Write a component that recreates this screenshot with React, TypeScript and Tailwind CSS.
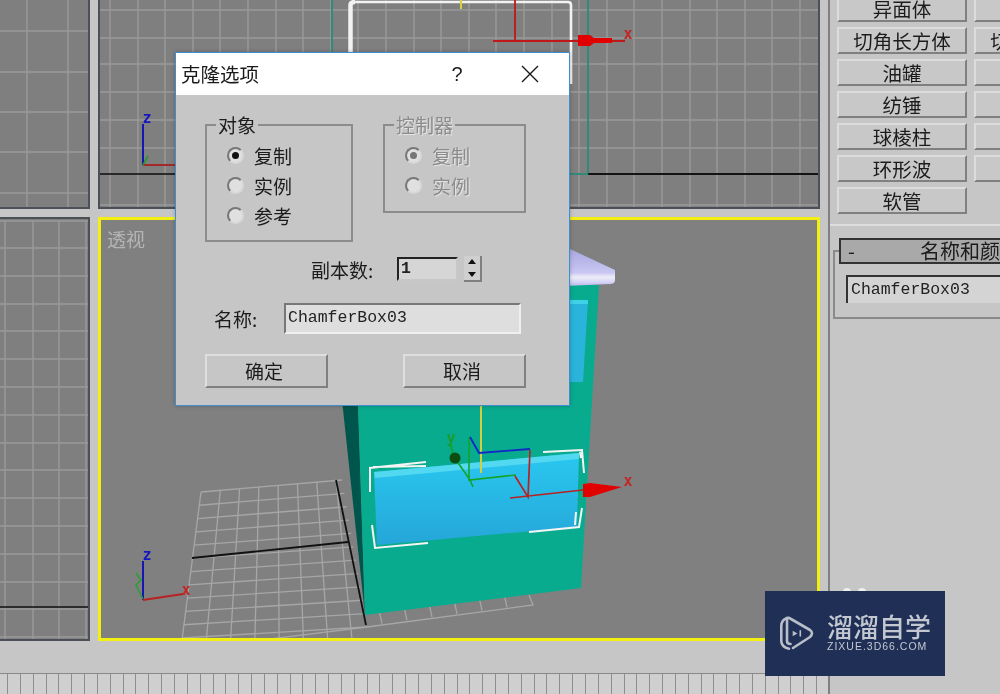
import React from "react";

const cjk = { fontFamily: '"Noto Sans CJK SC", "Noto Sans", sans-serif' };
const mono = { fontFamily: '"Liberation Mono", "Noto Sans CJK SC", monospace' };

function Lines({ xs, ys, x0, x1, y0, y1, color = "#9a9a9a" }: { xs: number[]; ys: number[]; x0: number; x1: number; y0: number; y1: number; color?: string }) {
  return (
    <g stroke={color} strokeWidth="1.4" fill="none">
      {xs.map((x) => <line key={"x" + x} x1={x} x2={x} y1={y0} y2={y1} />)}
      {ys.map((y) => <line key={"y" + y} y1={y} y2={y} x1={x0} x2={x1} />)}
    </g>
  );
}

function AxisLabel({ x, y, c, t }: { x: number; y: number; c: string; t: string }) {
  return <text x={x} y={y} fill={c} fontSize="15" fontWeight="700" fontFamily="DejaVu Sans Mono, monospace" textAnchor="middle">{t}</text>;
}

function TopLeftView() {
  return (
    <svg viewBox="0 0 88 207" className="block w-full h-full">
      <Lines xs={[27, 68]} ys={[31, 72, 112, 152, 193]} x0={0} x1={88} y0={0} y1={207} />
    </svg>
  );
}

function BottomLeftView() {
  const ys = [221, ...Array.from({ length: 15 }, (_, k) => Math.round(248 + 27.8 * k))];
  return (
    <svg viewBox="0 219 88 420" className="block w-full h-full">
      <Lines xs={[5, 33, 59, 86]} ys={ys} x0={0} x1={88} y0={221} y1={639} />
      <line x1="0" x2="88" y1="607" y2="607" stroke="#111" strokeWidth="1.6" />
    </svg>
  );
}

function TopMainView() {
  const xs = Array.from({ length: 26 }, (_, i) => Math.round(110 + 27.6 * i));
  return (
    <svg viewBox="100 0 718 207" className="block w-full h-full">
      <Lines xs={xs} ys={[10, 38, 64, 92, 120, 148, 205]} x0={100} x1={818} y0={0} y1={207} />
      <line x1="100" x2="818" y1="174" y2="174" stroke="#0d0d0d" strokeWidth="1.6" />
      <path d="M332 0V174H588V0" fill="none" stroke="#2f8a78" strokeWidth="1.8" />
      <path d="M588 174H818" stroke="#0d0d0d" strokeWidth="1.6" />
      <path d="M350.5 52V5Q350.5 2 355 2" fill="none" stroke="#f2f2f2" strokeWidth="4.5" />
      <path d="M355 2H568Q571 2 571 5V84" fill="none" stroke="#f2f2f2" strokeWidth="2.6" />
      <line x1="461" x2="461" y1="0" y2="9" stroke="#d8cf3a" strokeWidth="2" />
      <path d="M515 0V41M493 41H580M612 41H625" stroke="#c01818" strokeWidth="1.8" fill="none" />
      <path d="M578 35H590L594 38H612V43H594L590 46H578Z" fill="#e00000" />
      <AxisLabel x={628} y={39} c="#c02828" t="x" />
      <path d="M143 124V165" stroke="#1616b0" strokeWidth="2" />
      <path d="M143 165H175" stroke="#a82020" strokeWidth="1.8" />
      <path d="M143 165L148 156" stroke="#1f9c2a" strokeWidth="1.6" />
      <AxisLabel x={147} y={123} c="#1616c0" t="z" />
    </svg>
  );
}

function PerspectiveScene() {
  const rows = Array.from({ length: 12 }, (_, i) => i / 11);
  const cols = Array.from({ length: 8 }, (_, i) => i / 7);
  return (
    <svg viewBox="101 220 716 418" className="block w-full h-full">
      <g stroke="#a6a6a6" strokeWidth="1.3" fill="none">
        {rows.map((t) => (
          <line key={t} x1={201 - 19 * t} y1={492 + 146 * t} x2={342 + 25 * t} y2={480 + 147 * t} />
        ))}
        {cols.map((t) => (
          <line key={t} x1={201 + 135 * t} y1={492 - 12 * t} x2={182 + 170 * t} y2={640} />
        ))}
        <path d="M367 627L533 605L529 595" />
        {[385, 410, 435, 460, 485, 510].map((x) => (
          <line key={x} x1={x - 3} y1={626 - (x - 367) * 0.13} x2={x - 6} y2={612 - (x - 367) * 0.13} />
        ))}
        <path d="M262 640L367 627" />
      </g>
      <path d="M192 558L348 542" stroke="#111" strokeWidth="1.8" fill="none" />
      <path d="M336 480L366 625" stroke="#111" strokeWidth="1.8" fill="none" />

      <path d="M342 400H358L365 615Z" fill="#00564c" />
      <path d="M354 285H599L581 588L365 615Z" fill="#09ab8f" />
      <defs>
        <linearGradient id="plate" x1="0" y1="0" x2="0" y2="1">
          <stop offset="0" stopColor="#a9a7e0" />
          <stop offset="0.6" stopColor="#c8c6f2" />
          <stop offset="0.72" stopColor="#eeedf9" />
          <stop offset="0.85" stopColor="#d6d4f6" />
          <stop offset="1" stopColor="#a8a6e6" />
        </linearGradient>
        <linearGradient id="drawer" x1="0" y1="0" x2="0" y2="1">
          <stop offset="0" stopColor="#2ac8f0" />
          <stop offset="1" stopColor="#25a6d8" />
        </linearGradient>
      </defs>
      <path d="M520 249L570 249L615 270V280Q615 284 610 284L520 288Z" fill="url(#plate)" />
      <path d="M540 300H588L583 382H540Z" fill="#2ab4dc" />
      <path d="M540 300H588V304H540Z" fill="#3fd0ea" />

      <path d="M374 472L579 453L577 527L377 545Z" fill="url(#drawer)" />
      <path d="M374 472L579 453V459L375 478Z" fill="#52d8f0" />

      <g fill="none" stroke="#f4f4f4" strokeWidth="2">
        <path d="M370 492V468L426 462M373 467L426 466" />
        <path d="M543 452L582 450L584 473M580 452L581 458" />
        <path d="M372 525L375 548L428 543" />
        <path d="M529 532L579 527L582 508M575 525L576 512" />
      </g>

      <line x1="481" x2="481" y1="406" y2="473" stroke="#d0d040" strokeWidth="2" />
      <path d="M454 457L470 480L473 487M469 437V480L516 475" stroke="#11a52c" strokeWidth="1.6" fill="none" />
      <path d="M451 445L453 455" stroke="#11a52c" strokeWidth="2" fill="none" />
      <circle cx="455" cy="458" r="5.5" fill="#0d4d10" />
      <path d="M470 437L479 453L530 449" stroke="#1228c8" strokeWidth="1.8" fill="none" />
      <path d="M530 450L528 497L515 476M510 498L583 490" stroke="#b82222" strokeWidth="1.7" fill="none" />
      <path d="M583 484L590 483L622 487L590 497L583 497Z" fill="#e00000" />
      <AxisLabel x={628} y={486} c="#c02828" t="x" />
      <AxisLabel x={451} y={443} c="#1a9c2c" t="y" />

      <path d="M143 561V600" stroke="#1616b0" strokeWidth="2" />
      <path d="M143 600L183 594" stroke="#b82222" strokeWidth="2" />
      <path d="M143 599L136 585L141 580L136 573" stroke="#2a9e36" strokeWidth="1.6" fill="none" />
      <AxisLabel x={147} y={560} c="#1616c0" t="z" />
      <AxisLabel x={186} y={595} c="#c02828" t="x" />
    </svg>
  );
}

function Radio({ on, disabled }: { on?: boolean; disabled?: boolean }) {
  return (
    <span className="flex w-[17px] h-[17px] shrink-0 items-center justify-center rounded-full border-2 border-t-[#777777] border-l-[#777777] border-r-[#d8d8d8] border-b-[#d8d8d8] bg-[#e0e0e0]">
      {on && <span className={disabled ? "w-[7px] h-[7px] rounded-full bg-[#777777]" : "w-[7px] h-[7px] rounded-full bg-[#111111]"} />}
    </span>
  );
}

function RadioRow({ label, on, disabled }: { label: string; on?: boolean; disabled?: boolean }) {
  return (
    <div className="flex items-center gap-[10px] h-[30px]">
      <Radio on={on} disabled={disabled} />
      <span className={disabled ? "text-[19px] leading-none text-[#8b8b8b] [text-shadow:1px_1px_0_#e4e4e4]" : "text-[19px] leading-none text-[#1c1c1c]"}>{label}</span>
    </div>
  );
}

function WinButton({ label }: { label: string }) {
  return (
    <div className="flex items-center justify-center w-[123px] h-[34px] pr-[5px] border-2 border-t-[#dedede] border-l-[#dedede] border-r-[#808080] border-b-[#808080] bg-[#c6c6c6] text-[19px] text-[#1c1c1c]">
      {label}
    </div>
  );
}

function Dialog() {
  return (
    <div style={cjk} className="absolute left-[175px] top-[52px] w-[395px] h-[354px] border border-[#3f8fd0] bg-[#c6c6c6] shadow-[0_0_4px_rgba(0,0,0,0.25)]">
      <div className="flex items-center h-[42px] bg-white pl-[5px] text-[19.5px] text-[#1a1a1a]">
        <span className="leading-none">克隆选项</span>
        <span style={{ fontFamily: '"Liberation Sans", sans-serif' }} className="ml-[186px] w-[24px] text-center text-[20px] leading-none">?</span>
        <svg className="ml-[52px]" width="18" height="18" viewBox="0 0 18 18">
          <path d="M1 1L17 17M17 1L1 17" stroke="#1a1a1a" strokeWidth="1.4" fill="none" />
        </svg>
      </div>
      <div className="flex flex-col pt-[18px]">
        <div className="flex items-start gap-[30px] pl-[29px]">
          <fieldset className="w-[148px] h-[129px] border-2 border-[#8c8c8c] pl-5">
            <legend className="-ml-[11px] px-[2px] text-[19px] leading-[23px] text-[#1c1c1c]">对象</legend>
            <div className="pt-[4px]">
              <RadioRow label="复制" on />
              <RadioRow label="实例" />
              <RadioRow label="参考" />
            </div>
          </fieldset>
          <fieldset className="w-[143px] h-[100px] border-2 border-[#8c8c8c] pl-5">
            <legend className="-ml-[11px] px-[2px] text-[19px] leading-[23px] text-[#8b8b8b] [text-shadow:1px_1px_0_#e4e4e4]">控制器</legend>
            <div className="pt-[4px]">
              <RadioRow label="复制" on disabled />
              <RadioRow label="实例" disabled />
            </div>
          </fieldset>
        </div>

        <div className="flex items-center h-[26px] mt-[14px] pl-[135px]">
          <span className="w-[86px] text-[19px] leading-none text-[#1c1c1c]">副本数:</span>
          <div style={mono} className="flex items-center w-[61px] h-[24px] border-2 border-t-[#222222] border-l-[#222222] border-r-[#c8c8c8] border-b-[#c8c8c8] bg-[#d6d6d6] pl-[2px] text-[16.5px] font-bold text-[#222222]">1</div>
          <div className="flex flex-col ml-[6px] w-[18px] h-[26px] border-r-2 border-b-2 border-[#808080] bg-[#cfcfcf]">
            <svg className="flex-1 w-full" viewBox="0 0 16 12"><path d="M8 3L12 8H4Z" fill="#111" /></svg>
            <svg className="flex-1 w-full" viewBox="0 0 16 12"><path d="M8 9L12 4H4Z" fill="#111" /></svg>
          </div>
        </div>

        <div className="flex items-center h-[31px] mt-[21px] pl-[38px]">
          <span className="w-[70px] text-[19px] leading-none text-[#1c1c1c]">名称:</span>
          <div style={mono} className="flex items-center w-[237px] h-[31px] border-2 border-t-[#777777] border-l-[#777777] border-r-[#efefef] border-b-[#efefef] bg-[#dedede] pl-[2px] text-[16.5px] text-[#222222]">ChamferBox03</div>
        </div>

        <div className="flex gap-[75px] mt-[20px] pl-[29px]">
          <WinButton label="确定" />
          <WinButton label="取消" />
        </div>
      </div>
    </div>
  );
}

function PanelButton({ label }: { label?: string }) {
  return (
    <div className="flex items-center justify-center w-[130px] h-[27px] shrink-0 border-2 border-t-[#dcdcdc] border-l-[#dcdcdc] border-r-[#808080] border-b-[#808080] bg-[#c8c8c8] text-[19.5px] leading-none text-[#1c1c1c] whitespace-nowrap">
      {label}
    </div>
  );
}

function RightPanel() {
  const rows: [string, string | undefined][] = [
    ["异面体", undefined],
    ["切角长方体", "切角圆柱体"],
    ["油罐", undefined],
    ["纺锤", undefined],
    ["球棱柱", undefined],
    ["环形波", undefined],
  ];
  return (
    <aside style={cjk} className="flex flex-col w-[172px] h-full overflow-hidden border-l-2 border-[#808080] bg-[#c6c6c6]">
      <div className="flex flex-col h-[231px] shrink-0 overflow-hidden pl-[7px] border-b-2 border-[#dedede] -mt-[5px]">
        {rows.map(([a, b]) => (
          <div key={a} className="flex gap-[7px] shrink-0 mb-[5px]">
            <PanelButton label={a} />
            <PanelButton label={b} />
          </div>
        ))}
        <PanelButton label="软管" />
      </div>
      <div className="mt-[24px] ml-[3px] h-[69px] border-l-2 border-t-2 border-b-2 border-[#8a8a8a] shrink-0">
        <div className="-mt-[14px] ml-[4px] flex items-center h-[26px] w-[200px] border-2 border-[#333333] bg-[#a9a9a9] text-[20px] leading-none text-[#1c1c1c] whitespace-nowrap">
          <span className="ml-[7px] w-[72px]">-</span>
          <span>名称和颜色</span>
        </div>
        <div style={mono} className="mt-[11px] ml-[11px] flex items-center h-[28px] w-[200px] border-t-2 border-l-2 border-[#333333] bg-[#d4d4d4] pl-[3px] text-[16.5px] text-[#222222]">ChamferBox03</div>
      </div>
      <div className="relative flex-1">
        <span className="absolute left-[13px] top-[269px] w-[8px] h-[4px] rounded-t-full bg-[#eeeeee]" />
        <span className="absolute left-[28px] top-[269px] w-[8px] h-[4px] rounded-t-full bg-[#eeeeee]" />
      </div>
    </aside>
  );
}

function Watermark() {
  return (
    <div style={cjk} className="absolute left-[765px] top-[591px] flex items-center w-[180px] h-[85px] bg-[#1f2f56] pl-[14px] gap-[12px] text-[#c3c7d0]">
      <svg width="36" height="38" viewBox="0 0 36 38" fill="none" stroke="#b9bdc8" strokeWidth="2.6" strokeLinecap="round" strokeLinejoin="round">
        <path d="M10 33.7Q2.3 32 2.3 26V11Q2.3 5 8 3Q10 2.5 12 4L31 15Q35 18 31 22L14 33" />
        <path d="M8 3V26Q8 29 11.5 29" />
        <path d="M13.7 15.7L18.5 18.4L13.7 21.3Z" fill="#b9bdc8" stroke="none" />
        <path d="M21.3 15.7V21" strokeWidth="1.6" />
      </svg>
      <div className="flex flex-col pb-[3px]">
        <span className="text-[26px] leading-[26px] font-medium">溜溜自学</span>
        <span style={{ fontFamily: '"Liberation Sans", sans-serif' }} className="mt-[2px] text-[10.5px] leading-[11px] tracking-[1px] whitespace-nowrap">ZIXUE.3D66.COM</span>
      </div>
    </div>
  );
}

function Ruler() {
  const ticks = Array.from({ length: 65 });
  return (
    <div className="flex h-[21px] pl-[7px] overflow-hidden border-t border-[#8a8a8a] bg-[#cfcfcf]">
      {ticks.map((_, i) => (
        <div key={i} className="w-[12.85px] shrink-0 border-l border-[#8e8e8e]" />
      ))}
    </div>
  );
}

export default function App() {
  return (
    <div className="relative flex w-[1000px] h-[694px] overflow-hidden bg-[#c6c6c6] blur-[0.5px]">
      <main className="flex flex-col w-[828px] h-full shrink-0">
        <div className="grid grid-cols-[90px_722px] grid-rows-[209px_424px] gap-x-2 gap-y-2">
          <div className="border-r-2 border-b-2 border-[#4a5056] bg-[#7f7f7f]"><TopLeftView /></div>
          <div className="border-l-2 border-r-2 border-b-2 border-[#4a5056] bg-[#7f7f7f]"><TopMainView /></div>
          <div className="border-r-2 border-b-2 border-t-2 border-[#4a5056] bg-[#7f7f7f]"><BottomLeftView /></div>
          <div style={cjk} className="relative border-[3px] border-[#f4ef12] bg-[#808080]">
            <PerspectiveScene />
            <span className="absolute left-[6px] top-[7px] text-[19px] leading-[24px] text-[#b4b4b4]">透视</span>
          </div>
        </div>
        <div className="flex-1" />
        <Ruler />
      </main>
      <RightPanel />
      <Dialog />
      <Watermark />
    </div>
  );
}
